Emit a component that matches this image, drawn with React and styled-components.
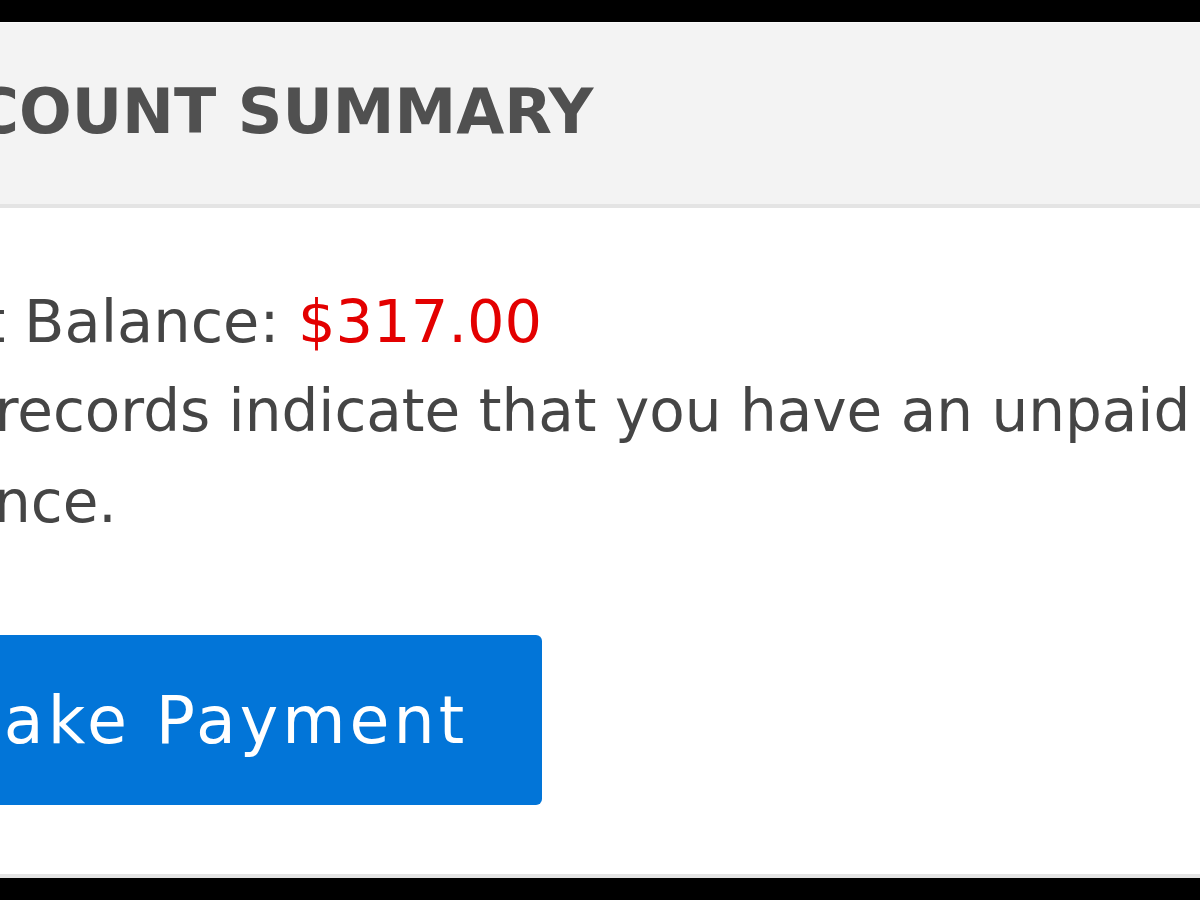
import React from "react";
import styled, { createGlobalStyle } from "styled-components";

const GlobalStyle = createGlobalStyle`
  html, body {
    margin: 0;
    padding: 0;
    background: #000;
    overflow: hidden;
  }
  * { box-sizing: border-box; }
`;

const Frame = styled.div`
  width: 1200px;
  height: 900px;
  padding-top: 22px;
  overflow: hidden;
  background: #000;
  font-family: "DejaVu Sans", Verdana, sans-serif;
`;

const Card = styled.section`
  margin-left: -130px;
  width: 1370px;
  height: 856px;
  background: #fff;
  border-top: 1px solid #fafafa;
  border-bottom: 4px solid #e4e4e4;
  display: flex;
  flex-direction: column;
`;

const Header = styled.header`
  background: #f3f3f3;
  border-bottom: 4px solid #e4e4e4;
  padding: 54px 0 57px 10px;
`;

const Title = styled.h2`
  margin: 0;
  font-size: 62px;
  line-height: 70px;
  font-weight: 700;
  color: #505050;
  white-space: nowrap;
`;

const Body = styled.div`
  padding: 76px 0 0 0;
  color: #454545;
  display: flex;
  flex-direction: column;
  align-items: flex-start;
`;

const BalanceLine = styled.p`
  margin: 0 0 0 8px;
  font-size: 59px;
  line-height: 76px;
  white-space: nowrap;
`;

const Amount = styled.span`
  color: #e30000;
`;

const Notice = styled.p`
  margin: 6px 0 0 0;
  font-size: 58px;
  line-height: 91px;
  width: 1340px;
`;

const PayButton = styled.button`
  margin-top: 87px;
  height: 170px;
  width: 672px;
  display: flex;
  align-items: center;
  justify-content: center;
  background: #0275d8;
  color: #fff;
  border: none;
  border-radius: 6px;
  font-family: inherit;
  font-size: 65px;
  letter-spacing: 4px;
  cursor: pointer;
`;

export default function App() {
  return (
    <>
      <GlobalStyle />
      <Frame>
        <Card>
          <Header>
            <Title>ACCOUNT SUMMARY</Title>
          </Header>
          <Body>
            <BalanceLine>
              Acct Balance: <Amount>$317.00</Amount>
            </BalanceLine>
            <Notice>Our records indicate that you have an unpaid balance.</Notice>
            <PayButton>Make Payment</PayButton>
          </Body>
        </Card>
      </Frame>
    </>
  );
}
